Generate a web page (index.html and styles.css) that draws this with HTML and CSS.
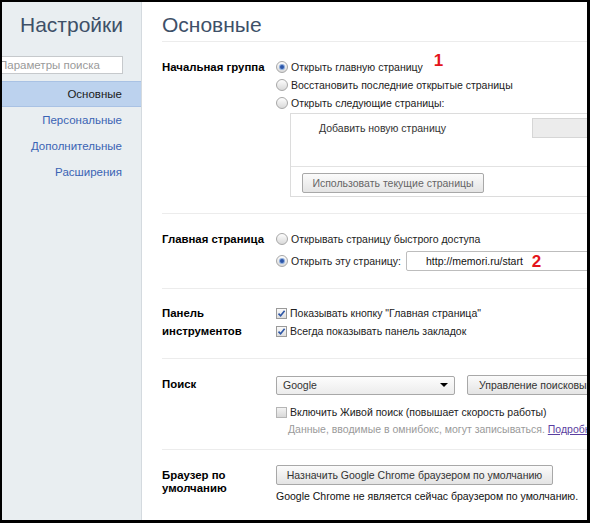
FILE: index.html
```html
<!DOCTYPE html>
<html lang="ru">
<head>
<meta charset="utf-8">
<title>Настройки — Основные</title>
<link rel="stylesheet" href="styles.css">
</head>
<body>
<div class="frame">
  <aside class="sidebar">
    <h1 class="side-title">Настройки</h1>
    <div class="search">Параметры поиска</div>
    <nav class="nav">
      <a class="nav-item active">Основные</a>
      <a class="nav-item">Персональные</a>
      <a class="nav-item">Дополнительные</a>
      <a class="nav-item">Расширения</a>
    </nav>
  </aside>
  <main class="main">
    <h1 class="page-title">Основные</h1>

    <section class="sec sec-start">
      <div class="sec-label">Начальная группа</div>
      <div class="sec-body">
        <div class="opt"><span class="radio on"></span>Открыть главную страницу<span class="mark mark-1">1</span></div>
        <div class="opt"><span class="radio"></span>Восстановить последние открытые страницы</div>
        <div class="opt"><span class="radio"></span>Открыть следующие страницы:</div>
        <div class="pages-box">
          <div class="pages-list">
            <div class="pages-row">
              <span class="pages-add">Добавить новую страницу</span>
              <span class="pages-input"></span>
            </div>
          </div>
          <div class="pages-foot">
            <span class="btn btn-dim btn-use">Использовать текущие страницы</span>
          </div>
        </div>
      </div>
    </section>

    <section class="sec sec-home">
      <div class="sec-label">Главная страница</div>
      <div class="sec-body">
        <div class="opt"><span class="radio"></span>Открывать страницу быстрого доступа</div>
        <div class="opt opt-url"><span class="radio on"></span>Открыть эту страницу:<span class="url-input">http://memori.ru/start<span class="mark mark-2">2</span></span></div>
      </div>
    </section>

    <section class="sec sec-toolbar">
      <div class="sec-label">Панель<br>инструментов</div>
      <div class="sec-body">
        <div class="opt"><span class="check on"><svg viewBox="0 0 9 9" width="9" height="9"><path d="M1.5 4.6 L3.6 6.8 L7.6 1.8" fill="none" stroke="#2d56a6" stroke-width="1.6"/></svg></span>Показывать кнопку "Главная страница"</div>
        <div class="opt"><span class="check on"><svg viewBox="0 0 9 9" width="9" height="9"><path d="M1.5 4.6 L3.6 6.8 L7.6 1.8" fill="none" stroke="#2d56a6" stroke-width="1.6"/></svg></span>Всегда показывать панель закладок</div>
      </div>
    </section>

    <section class="sec sec-search">
      <div class="sec-label">Поиск</div>
      <div class="sec-body">
        <div class="search-row">
          <span class="select">Google<span class="arrow"></span></span>
          <span class="btn btn-engines">Управление поисковыми системами...</span>
        </div>
        <div class="opt opt-instant"><span class="check"></span>Включить Живой поиск (повышает скорость работы)</div>
        <div class="hint">Данные, вводимые в омнибокс, могут записываться. <a class="link">Подробнее</a></div>
      </div>
    </section>

    <section class="sec sec-default">
      <div class="sec-label sec-label-tight">Браузер по<br>умолчанию</div>
      <div class="sec-body">
        <span class="btn btn-default">Назначить Google Chrome браузером по умолчанию</span>
        <div class="default-note">Google Chrome не является сейчас браузером по умолчанию.</div>
      </div>
    </section>
  </main>
</div>
</body>
</html>
```

FILE: styles.css
```css
html, body {
  margin: 0;
  padding: 0;
  background: #000;
}

.frame {
  width: 590px;
  height: 523px;
  box-sizing: border-box;
  border-style: solid;
  border-color: #000;
  border-width: 2px 3px 3px 2px;
  display: flex;
  overflow: hidden;
  background: #fff;
  font-family: "Liberation Sans", Arial, sans-serif;
  font-size: 10.5px;
  color: #222;
}

/* ---------- sidebar ---------- */
.sidebar {
  flex: none;
  width: 139px;
  background: #e9eef1;
  border-right: 1px solid #d4dadf;
}

.side-title {
  margin: 0;
  padding: 10px 18px 0 0;
  font-size: 21px;
  line-height: 26px;
  font-weight: normal;
  color: #3e5068;
  text-align: right;
}

.search {
  margin: 18px 18px 0 -10px;
  height: 16px;
  line-height: 16px;
  border: 1px solid #c6c9cc;
  background: #fff;
  color: #9a9a9a;
  font-size: 11.5px;
  padding-left: 6px;
  white-space: nowrap;
  overflow: hidden;
}

.nav {
  display: flex;
  flex-direction: column;
  margin-top: 7px;
}

.nav-item {
  display: block;
  height: 26px;
  line-height: 26px;
  padding-right: 19px;
  text-align: right;
  color: #3a63b4;
  font-size: 11.5px;
}

.nav-item.active {
  background: #bcd2ee;
  color: #1a1a1a;
  box-shadow: inset 0 1px 0 #a9c2e4, inset 0 -1px 0 #a9c2e4;
}

/* ---------- main ---------- */
.main {
  flex: none;
  width: 520px;
  padding-left: 20px;
}

.page-title {
  margin: 0;
  padding: 10px 0 3px;
  font-size: 21px;
  line-height: 26px;
  font-weight: normal;
  color: #3e5068;
  border-bottom: 1px solid #ececec;
}

.sec {
  display: flex;
  border-bottom: 1px solid #ececec;
}

.sec-label {
  flex: none;
  width: 114px;
  font-weight: bold;
  font-size: 11.4px;
  color: #000;
  line-height: 18px;
}

.sec-label-tight {
  line-height: 13px;
  padding-top: 4px;
}

.sec-body {
  flex: 1;
  min-width: 0;
}

.sec-start { padding: 16px 0 16px; }
.sec-home { padding: 16px 0 17px; }
.sec-toolbar { padding: 15px 0 18px; }
.sec-search { padding: 16px 0 11px; }
.sec-default { padding: 15px 0 20px; }

.opt {
  display: flex;
  align-items: center;
  height: 18px;
  white-space: nowrap;
  color: #222;
}

/* radio buttons */
.radio {
  flex: none;
  width: 10px;
  height: 10px;
  border: 1px solid #a7a7a7;
  border-radius: 50%;
  background: linear-gradient(#fdfdfd, #d9d9d9);
  margin-right: 3px;
  display: flex;
  align-items: center;
  justify-content: center;
}

.radio.on::after {
  content: "";
  width: 4px;
  height: 4px;
  border-radius: 50%;
  background: #2c55a8;
  box-shadow: 0 0 0 1px #8eaedd;
}

/* checkboxes */
.check {
  flex: none;
  width: 9px;
  height: 9px;
  border: 1px solid #9a9a9a;
  background: linear-gradient(#fafafa, #dedede);
  margin-right: 3px;
  display: flex;
  align-items: center;
  justify-content: center;
}

.check svg { display: block; }

.check:not(.on) {
  background: linear-gradient(#f3f3f3, #d8d8d8);
  border-color: #b5b5b5;
}

/* annotation marks */
.mark {
  color: #e4141b;
  font-weight: bold;
  font-size: 17px;
  line-height: 17px;
}

.mark-1 {
  margin-left: 11px;
  margin-bottom: 13px;
}

.mark-2 {
  margin-left: 9px;
}

/* start pages box */
.pages-box {
  margin: 1px 0 0 14px;
  border: 1px solid #dcdcdc;
}

.pages-list {
  height: 52px;
  border-bottom: 1px solid #e2e2e2;
}

.pages-row {
  display: flex;
  align-items: center;
  padding: 4px 0 0 28px;
}

.pages-add {
  width: 213px;
  flex: none;
  color: #333;
}

.pages-input {
  width: 120px;
  height: 18px;
  border: 1px solid #d6d6d6;
  background: #ececec;
}

.pages-foot {
  padding: 6px 0 3px 11px;
}

/* buttons */
.btn {
  display: inline-flex;
  align-items: center;
  justify-content: center;
  box-sizing: border-box;
  height: 20px;
  border: 1px solid #a8a8a8;
  border-radius: 2px;
  background: linear-gradient(#fbfbfb, #e4e4e4);
  color: #333;
  white-space: nowrap;
}

.btn-dim {
  color: #666;
}

.btn-use {
  width: 182px;
}

/* home page url */
.opt-url {
  height: 20px;
  margin-top: 3px;
}

.url-input {
  flex: 1;
  display: flex;
  align-items: center;
  box-sizing: border-box;
  height: 20px;
  margin-left: 5px;
  padding-left: 19px;
  border: 1px solid #bdbdbd;
  border-radius: 2px;
  color: #111;
}

/* search */
.search-row {
  display: flex;
  align-items: center;
  gap: 12px;
}

.select {
  display: flex;
  align-items: center;
  justify-content: space-between;
  box-sizing: border-box;
  width: 179px;
  height: 19px;
  padding: 0 6px 0 6px;
  border: 1px solid #a8a8a8;
  border-radius: 2px;
  background: linear-gradient(#fdfdfd, #ececec);
  color: #333;
}

.arrow {
  width: 0;
  height: 0;
  border-left: 4px solid transparent;
  border-right: 4px solid transparent;
  border-top: 4px solid #000;
}

.btn-engines {
  width: 200px;
  justify-content: flex-start;
  padding-left: 11px;
}

.opt-instant {
  margin-top: 8px;
}

.hint {
  padding-left: 12px;
  line-height: 17px;
  color: #9a9a9a;
  white-space: nowrap;
}

.link {
  color: #5a3ea0;
  text-decoration: underline;
}

/* default browser */
.btn-default {
  width: 277px;
}

.default-note {
  margin-top: 4px;
  line-height: 15px;
  color: #111;
  white-space: nowrap;
}
```
